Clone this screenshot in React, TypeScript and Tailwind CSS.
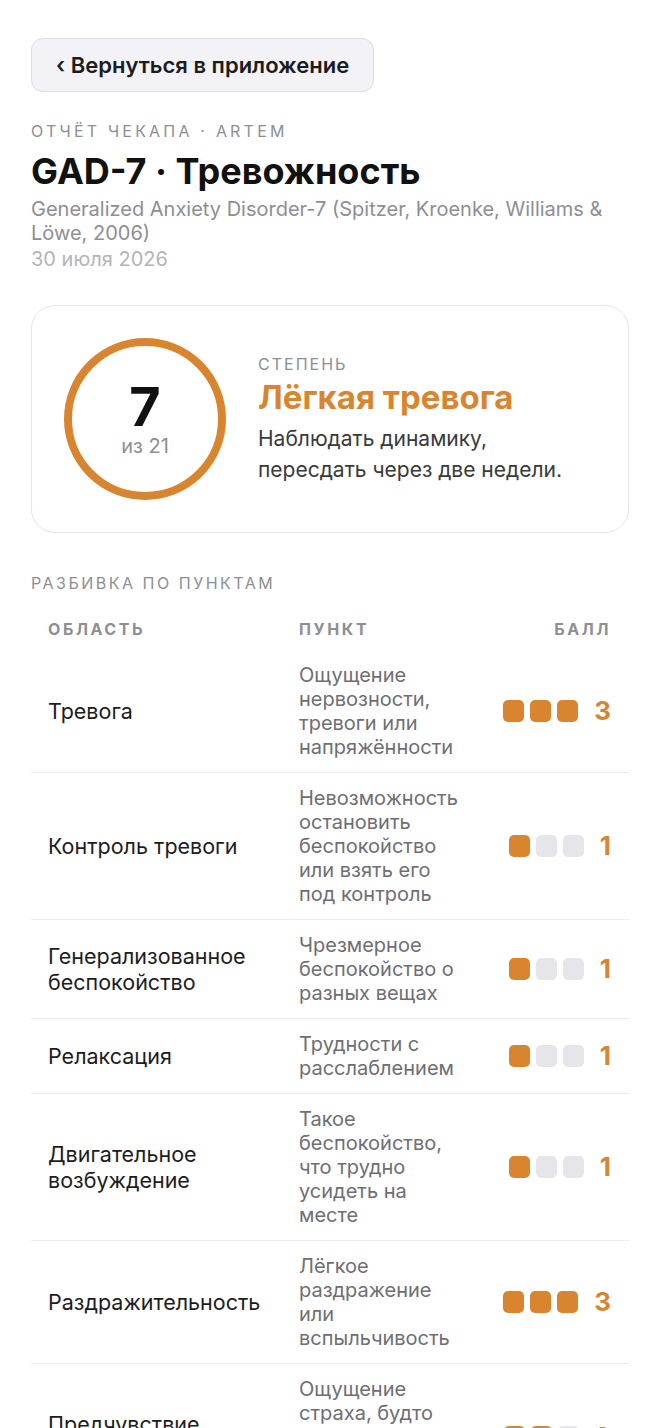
import React from "react";

const items = [
  { area: "Тревога", item: "Ощущение нервозности, тревоги или напряжённости", score: 3 },
  { area: "Контроль тревоги", item: "Невозможность остановить беспокойство или взять его под контроль", score: 1 },
  { area: "Генерализованное беспокойство", item: "Чрезмерное беспокойство о разных вещах", score: 1 },
  { area: "Релаксация", item: "Трудности с расслаблением", score: 1 },
  { area: "Двигательное возбуждение", item: "Такое беспокойство, что трудно усидеть на месте", score: 1 },
  { area: "Раздражительность", item: "Лёгкое раздражение или вспыльчивость", score: 3 },
  { area: "Предчувствие худшего", item: "Ощущение страха, будто может случиться что-то ужасное", score: 2 },
];

const ScoreBars = ({ score }: { score: number }) => (
  <div className="flex items-center justify-end gap-4">
    <div className="flex gap-[6px]">
      {[0, 1, 2].map((i) => (
        <span
          key={i}
          className={
            i < score
              ? "block w-[21px] h-[22px] rounded-[5px] bg-[#d9852f]"
              : "block w-[21px] h-[22px] rounded-[5px] bg-[#e5e5ea]"
          }
        />
      ))}
    </div>
    <span className="text-[26px] font-bold text-[#d9852f] leading-none">{score}</span>
  </div>
);

export default function App() {
  return (
    <div
      className="min-h-screen bg-white px-[31px] pt-[38px] pb-10 text-[#1c1c1e]"
      style={{ fontFamily: "Inter, 'Noto Sans', sans-serif" }}
    >
      <button className="h-[54px] px-6 rounded-xl border border-[#dcdce1] bg-[#f2f2f7] text-[22px] font-semibold text-[#1c1c1e]">
        ‹ Вернуться в приложение
      </button>

      <div className="mt-[29px] text-[16px] leading-5 tracking-[3.2px] text-[#8e8e93]">
        ОТЧЁТ ЧЕКАПА · ARTEM
      </div>
      <h1 className="mt-[10px] text-[36px] leading-[40px] font-bold text-[#111]">GAD-7 · Тревожность</h1>
      <p className="mt-[6px] text-[20px] leading-6 text-[#8e8e93]">
        Generalized Anxiety Disorder-7 (Spitzer, Kroenke, Williams &amp; Löwe, 2006)
      </p>
      <p className="mt-[2px] text-[20px] leading-6 text-[#b4b4b9]">30 июля 2026</p>

      <div className="mt-[34px] flex items-center gap-8 rounded-[24px] border border-[#e5e5ea] bg-white p-8">
        <div className="flex h-[162px] w-[162px] shrink-0 flex-col items-center justify-center rounded-full border-[8px] border-[#d9852f]">
          <span className="text-[54px] font-bold leading-[54px] text-[#111]">7</span>
          <span className="text-[20px] leading-6 text-[#8e8e93]">из 21</span>
        </div>
        <div>
          <div className="text-[16px] leading-5 tracking-[2px] text-[#8e8e93]">СТЕПЕНЬ</div>
          <div className="mt-[4px] text-[33px] font-bold leading-[38px] text-[#d9852f]">Лёгкая тревога</div>
          <p className="mt-[7px] text-[21px] leading-[31px] text-[#3a3a3c]">
            Наблюдать динамику,
            <br />
            пересдать через две недели.
          </p>
        </div>
      </div>

      <div className="mt-10 text-[16px] leading-5 tracking-[2.5px] text-[#8e8e93]">
        РАЗБИВКА ПО ПУНКТАМ
      </div>

      <div className="mt-[26px]">
        <div className="grid grid-cols-[268px_163px_1fr] pb-[11px] text-[16px] font-bold leading-5 tracking-[2.6px] text-[#8e8e93]">
          <div className="pl-[17px]">ОБЛАСТЬ</div>
          <div>ПУНКТ</div>
          <div className="pr-[18px] text-right">БАЛЛ</div>
        </div>
        {items.map((row) => (
          <div
            key={row.area}
            className="grid grid-cols-[268px_163px_1fr] items-center border-b border-[#ececf0] py-[13px]"
          >
            <div className="pl-[17px] pr-4 text-[21.5px] leading-[26px]">{row.area}</div>
            <div className="text-[20px] leading-6 text-[#6e6e73]">{row.item}</div>
            <div className="pr-[18px]">
              <ScoreBars score={row.score} />
            </div>
          </div>
        ))}
      </div>
    </div>
  );
}
